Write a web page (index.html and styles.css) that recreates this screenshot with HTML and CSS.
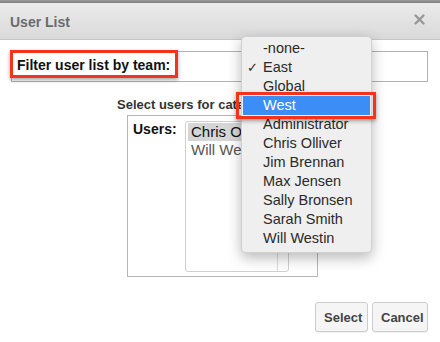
FILE: index.html
```html
<!DOCTYPE html>
<html>
<head>
<meta charset="utf-8">
<link rel="stylesheet" href="styles.css">
</head>
<body>
<div class="topstrip"></div>
<div class="dialog-header">
  <span class="dialog-title">User List</span>
  <svg class="close" width="11" height="11" viewBox="0 0 11 11"><path d="M1.5 1.5L9.5 9.5M9.5 1.5L1.5 9.5" stroke="#979797" stroke-width="2.4" stroke-linecap="round"/></svg>
</div>
<div class="dialog-body">
  <div class="filter-box">
    <span class="filter-label">Filter user list by team:</span>
  </div>
  <div class="select-title">Select users for category:</div>
  <div class="users-box">
    <span class="users-label">Users:</span>
    <div class="listbox">
      <div class="list-col">
        <div class="opt selected">Chris Olliver</div>
        <div class="opt">Will Westin</div>
      </div>
      <div class="list-scroll"></div>
    </div>
  </div>
  <div class="buttons">
    <button class="btn">Select</button>
    <button class="btn">Cancel</button>
  </div>
</div>

<div class="annot annot-filter"></div>

<div class="menu">
  <div class="mi">-none-</div>
  <div class="mi"><span class="check">✓</span>East</div>
  <div class="mi">Global</div>
  <div class="mi hl">West</div>
  <div class="mi">Administrator</div>
  <div class="mi">Chris Olliver</div>
  <div class="mi">Jim Brennan</div>
  <div class="mi">Max Jensen</div>
  <div class="mi">Sally Bronsen</div>
  <div class="mi">Sarah Smith</div>
  <div class="mi">Will Westin</div>
</div>
<div class="annot annot-west"></div>
</body>
</html>
```

FILE: styles.css
```css
* { box-sizing: border-box; }
html, body { margin: 0; padding: 0; }
body {
  width: 440px;
  height: 342px;
  overflow: hidden;
  background: #fff;
  font-family: "Liberation Sans", Arial, Helvetica, sans-serif;
  position: relative;
}
.topstrip {
  height: 3px;
  background: linear-gradient(#9a9a9a, #7d7d7d);
}
.dialog-header {
  height: 37px;
  background: linear-gradient(#ebebeb, #d9d9d9);
  border-bottom: 1px solid #c6c6c6;
  display: flex;
  align-items: center;
  justify-content: space-between;
  padding: 0 15px 0 10px;
}
.dialog-title {
  font-weight: bold;
  font-size: 14px;
  color: #6b6b6b;
  margin-top: 1px;
}
.close { display: block; margin-top: -3px; }

.dialog-body {
  padding: 11px 12px 0 11px;
}
.filter-box {
  height: 31px;
  border: 1px solid #b2b2b2;
  display: flex;
  align-items: center;
  padding-left: 5px;
}
.filter-label {
  font-weight: bold;
  font-size: 14px;
  color: #111;
  margin-top: -3px;
}
.select-title {
  margin: 15px 0 0 106px;
  width: 124px;
  overflow: hidden;
  font-weight: bold;
  font-size: 13px;
  color: #333;
  line-height: 16px;
  white-space: nowrap;
}
.users-box {
  margin: 2px 0 0 116px;
  width: 191px;
  height: 162px;
  border: 1px solid #b5b5b5;
  display: flex;
  padding: 5px 0 0 5px;
}
.users-label {
  font-weight: bold;
  font-size: 14px;
  color: #111;
  width: 52px;
  line-height: 16px;
}
.listbox {
  width: 104px;
  height: 151px;
  border: 1px solid #cfcfcf;
  border-radius: 3px;
  display: flex;
  padding: 1px 0 0 2px;
}
.list-col { flex: 1; overflow: hidden; }
.list-scroll {
  width: 11px;
  border-left: 1px solid #dcdcdc;
}
.opt {
  font-size: 15px;
  line-height: 18px;
  padding-left: 3px;
  color: #555;
  white-space: nowrap;
}
.opt.selected {
  background: #d6d6d6;
  color: #111;
}
.buttons {
  display: flex;
  justify-content: flex-end;
  gap: 4px;
  margin-top: 25px;
}
.btn {
  font-family: "Liberation Sans", Arial, sans-serif;
  font-weight: bold;
  font-size: 13px;
  color: #444;
  height: 30px;
  padding: 0 8px;
  background: #f5f5f5;
  border: 1px solid #cdcdcd;
  border-radius: 3px;
  box-shadow: 0 1px 1px rgba(0,0,0,0.06);
}
.btn:first-child { width: 53px; }
.btn:last-child { width: 56px; }

.menu {
  position: absolute;
  left: 241px;
  top: 36px;
  width: 131px;
  height: 217px;
  background: #efefef;
  border: 1px solid rgba(0,0,0,0.13);
  border-radius: 5px;
  box-shadow: 0 5px 14px rgba(0,0,0,0.28);
  padding: 2px 0 0 0;
}
.mi {
  position: relative;
  height: 19px;
  line-height: 19px;
  font-size: 14.5px;
  color: #2a2a2a;
  padding-left: 21px;
  white-space: nowrap;
}
.mi.hl {
  background: #3c8df6;
  color: #fff;
  margin: 0 1px;
  padding-left: 20px;
}
.check {
  position: absolute;
  left: 5px;
  top: 0;
  font-size: 13px;
  font-family: "DejaVu Sans", sans-serif;
}
.annot {
  position: absolute;
  border: 3px solid #f5321b;
  box-shadow: 0 2px 4px rgba(0,0,0,0.35);
}
.annot-filter {
  left: 10px;
  top: 50px;
  width: 168px;
  height: 28px;
}
.annot-west {
  left: 236px;
  top: 92px;
  width: 140px;
  height: 27px;
}
```
